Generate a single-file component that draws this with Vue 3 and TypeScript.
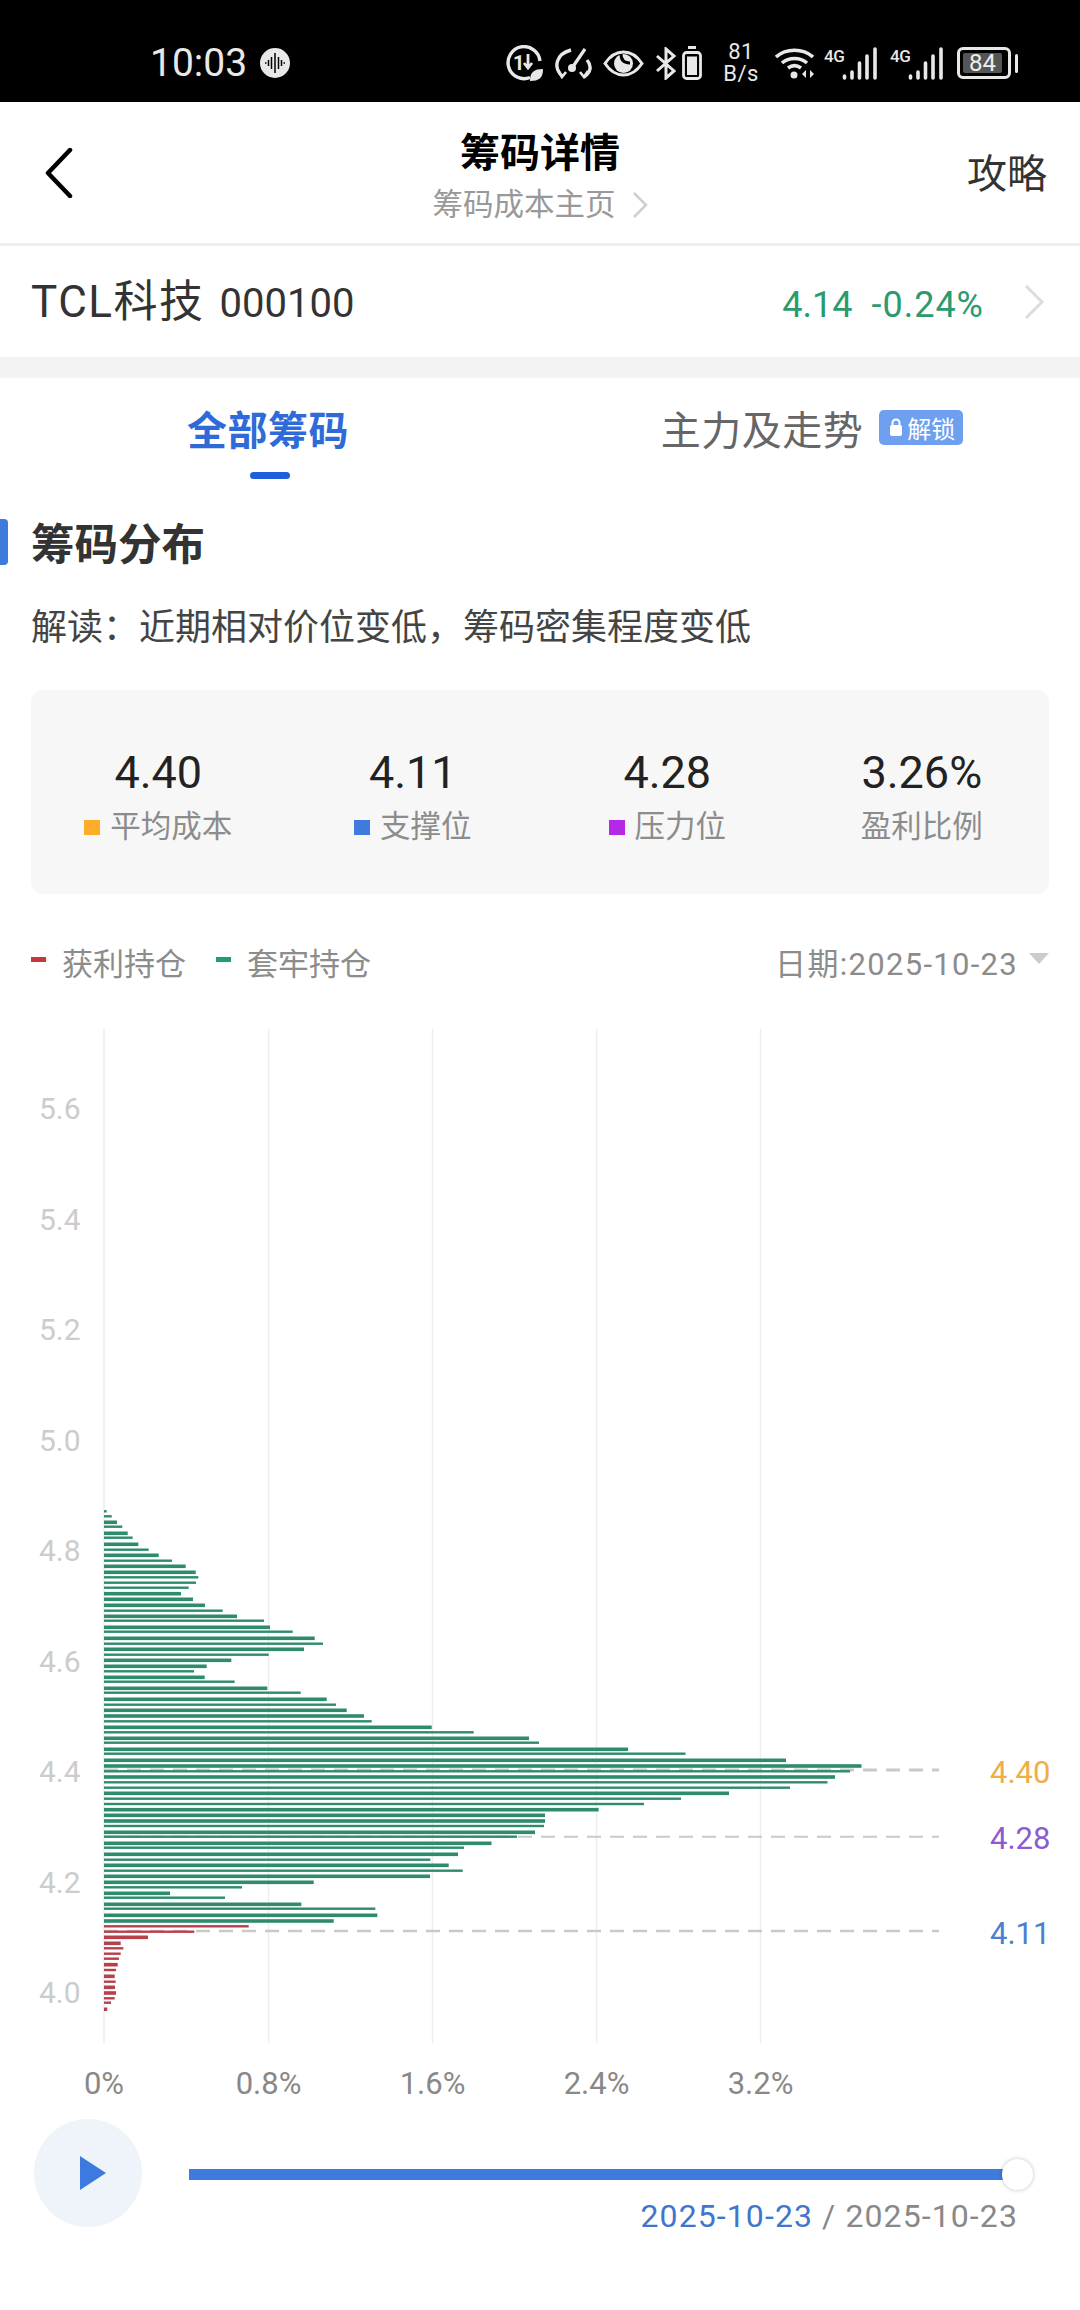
<script setup lang="ts">
// chart data, [center y, right end x] of every bar
const bars: [number, number][] = [
  [1510.3, 106.7], [1515.3, 111.7], [1521.3, 117], [1525.7, 122.3], [1532.3, 127.7], [1536.7, 132.7],
  [1543.3, 138.3], [1548.7, 148.7], [1554.3, 158.7], [1559.7, 172], [1565.3, 185.7], [1571.3, 195.7],
  [1576.3, 198.3], [1581.7, 196], [1586.7, 188.7], [1592.7, 181], [1598.3, 193], [1604.3, 205],
  [1609.7, 222.7], [1615.3, 237], [1619.7, 264], [1626.3, 270], [1630.7, 292.7], [1637.3, 314.7],
  [1642.7, 323], [1648.3, 304], [1653.7, 268.7], [1659.3, 231.3], [1665.3, 206.7], [1670.3, 194],
  [1676.3, 204.7], [1680.7, 234.7], [1687.3, 267.3], [1691.7, 300.7], [1698.3, 326.7], [1703.7, 336],
  [1709.3, 346.7], [1715, 364], [1720.3, 371.7], [1726.3, 431.7], [1731.3, 473.7], [1737.3, 529],
  [1741.7, 539], [1748.3, 628], [1752.7, 685.5], [1759.3, 786], [1765, 861.5], [1770.3, 850],
  [1776, 835], [1781.3, 827.5], [1786.7, 790], [1792.3, 729], [1797.7, 681], [1803, 644],
  [1808.7, 598.6], [1814.3, 545], [1820, 545], [1825, 544], [1831.3, 535], [1835.7, 517],
  [1842.3, 491.5], [1846.7, 464], [1853.3, 458], [1858.7, 430.3], [1864.3, 448.7], [1869.7, 462.7],
  [1875.3, 430], [1881.3, 313.7], [1886.3, 242], [1892.3, 170], [1896.7, 225], [1903.3, 301.3],
  [1907.7, 375.3], [1914.3, 377.3], [1920, 333.7], [1925.3, 248.7], [1930.7, 194.3], [1936.3, 148],
  [1942.3, 120.7], [1947.3, 123.3], [1952.7, 120.7], [1957.7, 119], [1963.7, 117.7], [1969, 116],
  [1975.3, 114.7], [1980.7, 115.7], [1986.3, 115], [1992, 116], [1997.3, 114.7], [2001.7, 111],
  [2008.3, 107.3],
];

const barX = 104;
const redFromY = 1923;
const gridX = [104, 268.5, 432.5, 596.5, 760.5];
const yLabels = [
  { text: '5.6', y: 1108 },
  { text: '5.4', y: 1218.5 },
  { text: '5.2', y: 1329 },
  { text: '5.0', y: 1439.5 },
  { text: '4.8', y: 1550 },
  { text: '4.6', y: 1660.5 },
  { text: '4.4', y: 1771 },
  { text: '4.2', y: 1881.5 },
  { text: '4.0', y: 1992 },
];
const levels = [
  { text: '4.40', y: 1769, labelY: 1771, width: 3, color: '#efae45' },
  { text: '4.28', y: 1835.7, labelY: 1837, width: 2, color: '#8e5ad2' },
  { text: '4.11', y: 1930, labelY: 1932, width: 2.5, color: '#4c7fcd' },
];
const xLabels = ['0%', '0.8%', '1.6%', '2.4%', '3.2%'];
const stats = [
  { value: '4.40', label: '平均成本', color: '#fbae2c' },
  { value: '4.11', label: '支撑位', color: '#3f7bdc' },
  { value: '4.28', label: '压力位', color: '#b529e6' },
  { value: '3.26%', label: '盈利比例', color: '' },
];

// bars that sit after a wider gap come out thicker in the reference
function barHeight(i: number) {
  if (i === 0) return 2.4;
  return bars[i][0] - bars[i - 1][0] >= 5.5 ? 3.6 : 2.4;
}
</script>

<template>
  <div class="page">
    <!-- status bar -->
    <div class="status">
      <span class="time">10:03</span>
      <svg class="rec" width="30" height="30" viewBox="0 0 30 30">
        <circle cx="15" cy="15" r="15" fill="#e8e8e8" />
        <path d="M5 15h1.500M8.500 12v6M11.500 9v12M15 5v20M18.500 9v12M21.500 12v6M23.500 15h1.500" stroke="#000" stroke-width="1.500" />
      </svg>
      <div class="status-right">
        <svg class="ic-saver" width="37" height="36" viewBox="0 0 37 36" fill="none" stroke="#e8e8e8">
          <path d="M24 32.500A16 16 0 1 1 34 16" stroke-width="3.400" />
          <text x="7" y="25" fill="#e8e8e8" stroke="none" font-size="20" font-weight="700">1</text>
          <path d="M22 9v14M18 18l4 5 4-5" stroke-width="2.800" />
          <path d="M24 36c0-9 4-12 13-12 0 9-4 12-13 12z" fill="#e8e8e8" stroke="none" />
        </svg>
        <svg class="ic-speed" width="37" height="31" viewBox="0 0 37 31" fill="none" stroke="#e8e8e8" stroke-width="3.400">
          <path d="M7 28C-2 19 1 6 16 2M32 12c5 6 4 12-3 17" />
          <path d="M3 22l4 7 4-5M25 24l4 5 4-6" stroke-width="2.600" />
          <path d="M17 20L30 1" stroke-width="3.200" />
          <circle cx="17" cy="20" r="4" fill="#e8e8e8" stroke="none" />
        </svg>
        <svg class="ic-eye" width="41" height="27" viewBox="0 0 41 27" fill="none">
          <path d="M2 13.500C8 4.500 14 2 20.500 2S33 4.500 39 13.500C33 22.500 27 25 20.500 25S8 22.500 2 13.500z" stroke="#e8e8e8" stroke-width="3" />
          <circle cx="20.500" cy="13.500" r="9.500" fill="#e8e8e8" />
          <path d="M18 4c0 6 3 9 9 9" stroke="#000" stroke-width="3" />
        </svg>
        <svg class="ic-bt" width="20" height="33" viewBox="0 0 20 33" fill="none" stroke="#e8e8e8" stroke-width="3">
          <path d="M1 9l17 15-8 7V2l8 7L1 24" />
        </svg>
        <svg class="ic-bat" width="20" height="34" viewBox="0 0 20 34" fill="none" stroke="#e8e8e8">
          <path d="M6 1.500h8" stroke-width="3" />
          <rect x="1.500" y="6.500" width="17" height="26" rx="3" stroke-width="2.800" />
          <rect x="5" y="10.500" width="10" height="18.500" fill="#e8e8e8" stroke="none" />
        </svg>
        <div class="speed"><span>81</span><span>B/s</span></div>
        <svg class="ic-wifi" width="39" height="31" viewBox="0 0 39 31" fill="none" stroke="#e8e8e8" stroke-width="3.600">
          <path d="M1 9c10-9 27-9 37 0M7 15c7-6 18-6 25 0M13 20c4-3 9-3 13 0" />
          <circle cx="19" cy="27" r="3.500" fill="#e8e8e8" stroke="none" />
          <path d="M31 22l-4 4 4 4zM35 22l4 4-4 4z" fill="#e8e8e8" stroke="none" />
        </svg>
        <div class="sim">
          <span class="sim-label">4G</span>
          <svg width="36" height="33" viewBox="0 0 36 33" fill="none" stroke="#e8e8e8" stroke-width="3.600" stroke-linecap="round">
            <path d="M2.500 29v2M10 25v6M17.500 16v15M25 9v22M33 2v29" />
          </svg>
        </div>
        <div class="sim sim-two">
          <span class="sim-label">4G</span>
          <svg width="36" height="33" viewBox="0 0 36 33" fill="none" stroke="#e8e8e8" stroke-width="3.600" stroke-linecap="round">
            <path d="M2.500 29v2M10 25v6M17.500 16v15M25 9v22M33 2v29" />
          </svg>
        </div>
        <div class="battery">
          <div class="battery-body"><span>84</span></div>
          <div class="battery-nub"></div>
        </div>
      </div>
    </div>

    <!-- nav -->
    <div class="nav">
      <svg class="back" width="30" height="50" viewBox="0 0 30 50" fill="none">
        <path d="M26 2L4 25l22 23" stroke="#000" stroke-width="4.500" stroke-linecap="round" stroke-linejoin="round" />
      </svg>
      <div class="nav-center">
        <div class="nav-title">筹码详情</div>
        <div class="nav-sub">
          筹码成本主页
          <svg width="16" height="26" viewBox="0 0 16 26" fill="none">
            <path d="M2 1l12 12L2 25" stroke="#cfcfcf" stroke-width="2.500" />
          </svg>
        </div>
      </div>
      <div class="nav-right">攻略</div>
    </div>

    <!-- stock row -->
    <div class="stock">
      <span class="stock-name">TCL科技</span>
      <span class="stock-code">000100</span>
      <span class="stock-price">4.14</span>
      <span class="stock-change">-0.24%</span>
      <svg class="stock-arrow" width="20" height="34" viewBox="0 0 20 34" fill="none">
        <path d="M2 1l16 16L2 33" stroke="#dcdcdc" stroke-width="3" />
      </svg>
    </div>
    <div class="divider"></div>

    <!-- tabs -->
    <div class="tabs">
      <div class="tab tab-active">
        全部筹码
        <div class="tab-line"></div>
      </div>
      <div class="tab">
        主力及走势
        <span class="badge">
          <svg width="14" height="20" viewBox="0 0 14 20">
            <path d="M3.500 9V6a3.500 3.500 0 0 1 7 0v3" fill="none" stroke="#fff" stroke-width="2" />
            <rect x="1" y="8" width="12" height="11" rx="2" fill="#fff" />
          </svg>
          解锁
        </span>
      </div>
    </div>

    <!-- section -->
    <div class="section-head">筹码分布</div>
    <div class="reading">解读&#xFF1A;近期相对价位变低&#xFF0C;筹码密集程度变低</div>

    <div class="stats">
      <div v-for="s in stats" :key="s.label" class="stat">
        <div class="stat-value">{{ s.value }}</div>
        <div class="stat-label">
          <i v-if="s.color" class="stat-dot" :style="{ background: s.color }"></i>
          {{ s.label }}
        </div>
      </div>
    </div>

    <div class="legend">
      <i class="legend-mark red"></i>
      <span class="legend-text">获利持仓</span>
      <i class="legend-mark green"></i>
      <span class="legend-text">套牢持仓</span>
      <span class="legend-date">日期:2025-10-23</span>
      <i class="legend-arrow"></i>
    </div>

    <!-- chart, coordinates in the svg are page coordinates -->
    <svg class="chart" width="1080" height="1014" viewBox="0 1028 1080 1014">
      <line v-for="x in gridX" :key="x" :x1="x" :x2="x" y1="1028" y2="2042" stroke="#eeeeee" stroke-width="1.500" />
      <line
        v-for="l in levels"
        :key="l.text"
        x1="104"
        x2="939"
        :y1="l.y"
        :y2="l.y"
        stroke="#c9c9c9"
        :stroke-width="l.width"
        stroke-dasharray="14 9"
      />
      <rect
        v-for="(b, i) in bars"
        :key="b[0]"
        :x="barX"
        :y="b[0] - barHeight(i) / 2"
        :width="b[1] - barX"
        :height="barHeight(i)"
        :fill="b[0] > redFromY ? '#b8404a' : '#2e8c6c'"
      />
      <text v-for="l in yLabels" :key="l.text" x="39" :y="l.y + 10" class="y-label">{{ l.text }}</text>
      <text v-for="l in levels" :key="l.text" x="990" :y="l.labelY + 11" class="level-label" :fill="l.color">{{ l.text }}</text>
    </svg>

    <div class="x-axis">
      <span v-for="(t, i) in xLabels" :key="t" class="x-label" :style="{ left: gridX[i] + 'px' }">{{ t }}</span>
    </div>

    <!-- player -->
    <div class="player">
      <div class="play">
        <svg width="26" height="34" viewBox="0 0 26 34">
          <path d="M0 0l26 17L0 34z" fill="#3d7adf" />
        </svg>
      </div>
      <div class="player-main">
        <div class="track">
          <div class="thumb"></div>
        </div>
        <div class="player-date"><span class="date-now">2025-10-23</span> / 2025-10-23</div>
      </div>
    </div>
  </div>
</template>

<style scoped>
.page {
  width: 1080px;
  height: 2310px;
  background: #fff;
  overflow: hidden;
  font-family: Roboto, "Noto Sans CJK SC", sans-serif;
  color: #333;
}
.status {
  height: 102px;
  background: #000;
  display: flex;
  align-items: center;
  padding: 24px 62px 0 150px;
  box-sizing: border-box;
  color: #e8e8e8;
}
.time {
  font-size: 39px;
  line-height: 1;
  width: 100px;
}
.rec {
  margin-left: 10px;
}
.status-right {
  margin-left: auto;
  display: flex;
  align-items: center;
}
.ic-speed {
  margin-left: 12px;
}
.ic-eye {
  margin-left: 11px;
}
.ic-bt {
  margin-left: 12px;
}
.ic-bat {
  margin-left: 6px;
}
.speed {
  margin-left: 22px;
  width: 34px;
  display: flex;
  flex-direction: column;
  align-items: center;
  font-size: 22px;
  letter-spacing: 0.5px;
  line-height: 22px;
}
.ic-wifi {
  margin-left: 17px;
}
.sim {
  display: flex;
  margin-left: 10px;
  height: 33px;
}
.sim-two {
  margin-left: 12px;
}
.sim-label {
  font-size: 17px;
  font-weight: 500;
  letter-spacing: -0.5px;
  line-height: 18px;
  width: 18px;
}
.battery {
  display: flex;
  align-items: center;
  margin-left: 13px;
}
.battery-body {
  width: 54px;
  height: 32px;
  box-sizing: border-box;
  border: 3px solid #e8e8e8;
  border-radius: 6px;
  padding: 3px;
  display: flex;
}
.battery-body span {
  flex: 0 0 39px;
  background: #555;
  border-radius: 2px;
  font-size: 24px;
  line-height: 20px;
  text-align: center;
  color: #eee;
}
.battery-nub {
  width: 3px;
  height: 19px;
  margin-left: 4px;
  background: #e8e8e8;
  border-radius: 2px;
}
.nav {
  height: 144px;
  box-sizing: border-box;
  border-bottom: 3px solid #eeeeee;
  display: grid;
  grid-template-columns: 1fr auto 1fr;
  align-items: center;
  padding: 0 33px;
}
.back {
  margin-top: 1px;
  margin-left: 11px;
}
.nav-center {
  display: flex;
  flex-direction: column;
  align-items: center;
  margin-top: 16px;
}
.nav-title {
  font-size: 40px;
  font-weight: 700;
  line-height: 56px;
  color: #000;
  margin-top: -8px;
}
.nav-sub {
  font-size: 30.500px;
  line-height: 44px;
  color: #999;
  display: flex;
  align-items: center;
  gap: 16px;
  margin-top: 1px;
}
.nav-right {
  justify-self: end;
  font-size: 40px;
  color: #333;
  margin-top: -4px;
}
.stock {
  height: 111px;
  display: flex;
  align-items: baseline;
  padding: 0 36px 0 31px;
}
.stock-name {
  font-size: 44px;
  letter-spacing: 1.500px;
  line-height: 113px;
  color: #333;
}
.stock-code {
  font-size: 40px;
  margin-left: 15px;
}
.stock-price,
.stock-change {
  font-size: 36px;
  color: #2a9a6f;
}
.stock-price {
  margin-left: auto;
}
.stock-change {
  margin-left: 19px;
  margin-right: 40px;
  letter-spacing: 1px;
}
.stock-arrow {
  align-self: center;
}
.divider {
  height: 21px;
  background: #f3f3f3;
}
.tabs {
  display: flex;
  height: 110px;
}
.tab {
  flex: 1;
  position: relative;
  display: flex;
  align-items: center;
  justify-content: center;
  gap: 16px;
  font-size: 40px;
  letter-spacing: 0.500px;
  color: #666;
  padding-bottom: 10px;
  box-sizing: border-box;
}
.tab-active {
  color: #2f6bd8;
  font-weight: 700;
  padding-right: 8px;
}
.tab-line {
  position: absolute;
  left: 250px;
  top: 94px;
  width: 40px;
  height: 7px;
  border-radius: 4px;
  background: #1f5fdc;
}
.badge {
  display: flex;
  align-items: center;
  gap: 4px;
  height: 35px;
  padding: 0 8px 0 10px;
  background: #6f9fef;
  border-radius: 5px;
  color: #fff;
  font-size: 24px;
  letter-spacing: 0;
  font-weight: 400;
  margin-top: -2px;
}
.section-head {
  margin-top: 30px;
  height: 48px;
  line-height: 56px;
  padding-left: 31px;
  font-size: 43.500px;
  font-weight: 700;
  color: #333;
  position: relative;
}
.section-head::before {
  content: "";
  position: absolute;
  left: 0;
  top: 1px;
  width: 8px;
  height: 46px;
  border-radius: 0 4px 4px 0;
  background: #3f7bdc;
}
.reading {
  margin-top: 38px;
  padding-left: 31px;
  font-size: 36px;
  line-height: 48px;
  color: #444;
}
.stats {
  margin: 38px 31px 0;
  height: 204px;
  background: #f7f7f7;
  border-radius: 12px;
  display: grid;
  grid-template-columns: repeat(4, 1fr);
  align-content: start;
  padding-top: 54px;
  box-sizing: border-box;
}
.stat {
  display: flex;
  flex-direction: column;
  align-items: center;
}
.stat-value {
  font-size: 45px;
  line-height: 58px;
  color: #222;
}
.stat-label {
  display: flex;
  align-items: center;
  gap: 10px;
  font-size: 30.500px;
  line-height: 46px;
  margin-top: 2px;
  color: #8c8c8c;
}
.stat-dot {
  width: 16px;
  height: 15px;
}
.legend {
  margin-top: 44px;
  height: 46px;
  padding: 0 31px;
  display: flex;
  align-items: center;
  font-size: 31px;
  color: #8c8c8c;
}
.legend-mark {
  width: 15px;
  height: 5px;
  margin-top: -3px;
}
.legend-mark.red {
  background: #c8373f;
}
.legend-mark.green {
  background: #1f9e73;
  margin-left: 30px;
}
.legend-text {
  margin-left: 16px;
}
.legend-date {
  margin-left: auto;
  letter-spacing: 1.300px;
}
.legend-arrow {
  width: 0;
  height: 0;
  margin-left: 11px;
  margin-top: -6px;
  border-left: 10px solid transparent;
  border-right: 10px solid transparent;
  border-top: 11px solid #cccccc;
}
.chart {
  display: block;
  margin-top: 45px;
}
.y-label {
  font-size: 30px;
  fill: #cccccc;
}
.level-label {
  font-size: 31px;
}
.x-axis {
  position: relative;
  height: 82px;
}
.x-label {
  position: absolute;
  top: 19px;
  transform: translateX(-50%);
  font-size: 31px;
  line-height: 44px;
  color: #888;
}
.player {
  display: flex;
  padding: 0 62px 0 34px;
  margin-top: -6px;
}
.play {
  width: 108px;
  height: 108px;
  border-radius: 50%;
  background: #eff3fa;
  display: flex;
  align-items: center;
  justify-content: center;
  padding-left: 10px;
  box-sizing: border-box;
  flex: none;
}
.player-main {
  flex: 1;
  margin-left: 47px;
  padding-top: 50px;
}
.track {
  height: 11px;
  background: #3f7bdc;
  position: relative;
}
.thumb {
  position: absolute;
  right: -15px;
  top: -10px;
  width: 31px;
  height: 31px;
  border-radius: 50%;
  background: #fff;
  box-shadow: 0 0 4px rgba(0, 0, 0, 0.25);
}
.player-date {
  margin-top: 14px;
  text-align: right;
  font-size: 32px;
  letter-spacing: 1.100px;
  line-height: 44px;
  color: #888;
}
.date-now {
  color: #3f76cc;
}
</style>
